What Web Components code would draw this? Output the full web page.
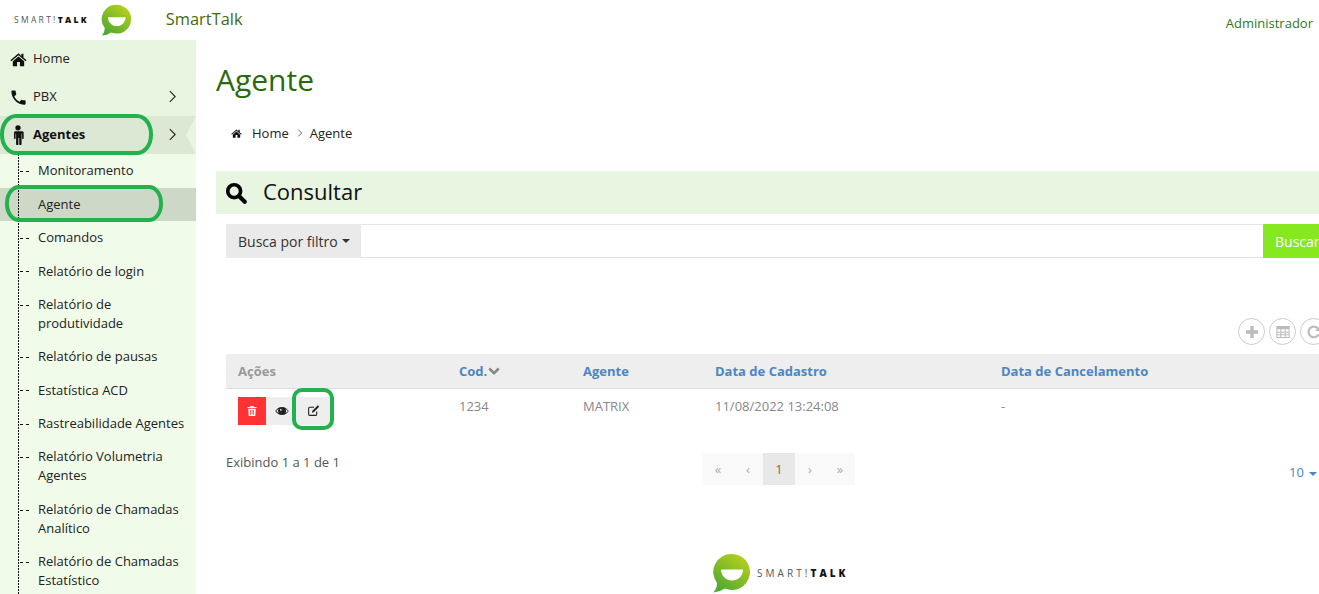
<!DOCTYPE html>
<html lang="pt"><head><meta charset="utf-8"><title>SmartTalk</title>
<style>
html,body{margin:0;padding:0;height:594px;overflow:hidden;background:#fff}
body{font:13px/19px "Open Sans",sans-serif;color:#333}
</style></head><body>
<st-app></st-app>
<script>
const ICONS={
home:'<path fill="currentColor" d="M12 3.200 .6 13l1.300 1.500L12 5.900l10.100 8.600 1.300-1.500-4.400-3.800V4h-3v3.100z"/><path fill="currentColor" d="M12 7.800 4 14.600V21.500h6v-6h4v6h6v-6.900z"/>',
phone:'<path fill="currentColor" d="M6.600 10.800c1.400 2.800 3.800 5.100 6.600 6.600l2.200-2.200c.3-.3.700-.4 1-.2 1.100.4 2.300.6 3.600.6.600 0 1 .4 1 1V20c0 .6-.4 1-1 1C10.600 21 3 13.400 3 4c0-.6.400-1 1-1h3.500c.6 0 1 .4 1 1 0 1.300.2 2.500.6 3.600.1.300 0 .7-.2 1z"/>',
male:'<circle cx="12" cy="3.400" r="3.200" fill="currentColor"/><path fill="currentColor" d="M7 7.500h10c1 0 1.800.8 1.800 1.800v6.700c0 1.300-1.900 1.300-1.900 0v-5.800h-.6V23c0 1.500-2.800 1.500-2.800 0v-7.500h-1V23c0 1.500-2.800 1.500-2.800 0V10.200h-.6v5.800c0 1.300-1.900 1.300-1.900 0V9.300c0-1 .8-1.800 1.800-1.800z"/>',
search:'<circle cx="10" cy="10" r="7" fill="none" stroke="currentColor" stroke-width="4"/><path d="M15.200 15.200 21.500 21.500" stroke="currentColor" stroke-width="4.600" stroke-linecap="round"/>',
trash:'<path fill="currentColor" d="M9 2h6l1 2h5v2.200H3V4h5zM4.500 7.500h15L18.500 22h-13zM8.300 10v9.500h1.500V10zm3 0v9.500h1.500V10zm3 0v9.500h1.500V10z"/>',
eye:'<path fill="currentColor" fill-rule="evenodd" d="M12 5C6.500 5 2.500 8.700.5 12c2 3.300 6 7 11.500 7s9.500-3.700 11.500-7C21.500 8.700 17.500 5 12 5zM5.800 8.500C4.300 9.500 3.100 10.700 2.300 12c1 1.400 2.300 2.700 3.900 3.600A7.500 7.500 0 0 1 5.800 8.500zm12.400 0a7.500 7.500 0 0 1 0 7.100c1.600-.9 2.900-2.200 3.900-3.600-.8-1.300-2-2.500-3.900-3.500z"/><circle cx="10" cy="10" r="1.600" fill="#eee"/>',
edit:'<path fill="none" stroke="currentColor" stroke-width="2" d="M18 14v5a2 2 0 0 1-2 2H5a2 2 0 0 1-2-2V8a2 2 0 0 1 2-2h8"/><path fill="currentColor" d="M20 2.500l2.500 2.500L12.500 15 9 16l1-3.500z"/>',
plus:'<path fill="currentColor" d="M9.500 3h5v6.500H21v5h-6.500V21h-5v-6.500H3v-5h6.500z"/>',
table:'<path fill="currentColor" fill-rule="evenodd" d="M2 3h20v18H2zm1.500 5v3.500h4.500V8zm6 0v3.500h5V8zm6.500 0v3.500h4.500V8zM3.500 13v2.500h4.500V13zm6 0v2.500h5V13zm6.500 0v2.500h4.500V13zM3.500 17v2.500h4.500V17zm6 0v2.500h5V17zm6.500 0v2.500h4.500V17z"/>',
refresh:'<path fill="none" stroke="currentColor" stroke-width="3.200" d="M19 15.500A8 8 0 1 1 18.200 7"/><path fill="currentColor" d="M21.500 2.500v8h-8z"/>',
chev:'<path fill="none" stroke="currentColor" stroke-width="2" d="M7 2 17 12 7 22"/>',
down:'<path fill="none" stroke="currentColor" stroke-width="5" d="M2.500 7 12 16.500 21.500 7"/>'
};
function def(name,css,html){
  customElements.define(name,class extends HTMLElement{
    constructor(){super();const s=this.attachShadow({mode:'open'});
      s.innerHTML='<style>'+css+'</style>'+(typeof html==='function'?html(this):html);}
  });
}
def('st-icon',':host{display:inline-flex;width:var(--s,14px);height:var(--s,14px);flex:none}svg{width:100%;height:100%;display:block}',
  h=>'<svg viewBox="0 0 24 24" aria-hidden="true">'+ICONS[h.getAttribute('name')]+'</svg>');
def('st-logo',`:host{display:inline-flex;align-items:center}
  .t{font:400 var(--fs,8px)/1 "Open Sans",sans-serif;letter-spacing:var(--ls,2px);color:#555;white-space:nowrap}
  b{font-weight:800;color:#111}svg{display:block;flex:none;width:var(--w,32px);height:var(--w,32px)}`,
  h=>{const id='g'+Math.random().toString(36).slice(2);
  const svg='<svg viewBox="0 0 40 40"><defs><linearGradient id="'+id+'" x1=".85" y1="0" x2=".15" y2="1"><stop offset="0" stop-color="#bcd21c"/><stop offset="1" stop-color="#4aa632"/></linearGradient></defs><path fill="url(#'+id+')" d="M21 1a18 18 0 1 1-7 34.600Q9 39 2.500 39.500 6 35.500 6 30A18 18 0 0 1 21 1z"/><path fill="#fff" d="M10 16.500h22c0 6.500-5 11-11 11S10 23 10 16.500z"/></svg>';
  const txt='<span class="t">SMART!<b>TALK</b></span>';
  return h.hasAttribute('icon-first')?svg+'<span style="width:6px"></span>'+txt:txt+'<span style="width:11px"></span>'+svg;});
def('st-header',`:host{display:flex;align-items:center;height:40px;position:relative;padding-left:14px}
  .name{font-size:16.400px;color:#3f6b0f;margin-left:34px;margin-top:-2px;line-height:20px}
  .spacer{flex:1}.admin{font-size:13px;color:#2d7a1f;padding-right:6px;margin-top:7px}`,
  `<st-logo style="--fs:8.500px;--ls:2.300px;--w:32px"></st-logo><span class="name">SmartTalk</span><span class="spacer"></span><span class="admin">Administrador</span>`);
def('st-nav',`:host{display:flex;align-items:center;height:var(--h,38px);padding-left:10px;padding-right:17px;position:relative;color:#222;font-size:13px;box-sizing:border-box}
  :host([active]){background:#dce8d4;font-weight:700;color:#111}
  :host([active])::after{content:"";position:absolute;right:0;top:0;border-style:solid;border-width:19px 10px 19px 0;border-color:transparent #e8f5e0 transparent transparent;display:block;height:0;width:0}
  .ic{width:16px;flex:none;display:flex;justify-content:center;color:#111}
  .l{flex:1;margin-left:7px;position:relative;top:-1px}.c{--s:13px;color:#222;position:relative;top:-1px}`,
  h=>'<span class="ic"><st-icon style="--s:'+(h.getAttribute('size')||16)+'px" name="'+h.getAttribute('icon')+'"></st-icon></span><span class="l"><slot></slot></span>'+(h.hasAttribute('arrow')?'<st-icon class="c" name="chev"></st-icon>':''));
def('st-sub',`:host{display:block;position:relative;padding:7.200px 8px 7.200px 38px;color:#222;font-size:13px;line-height:19px}
  :host([active]){background:#cdd8c7}
  :host::before{content:"";position:absolute;left:20px;top:17px;width:10px;height:1px;background:repeating-linear-gradient(90deg,#111 0 3px,transparent 3px 6px)}
  :host([active])::before{display:none}`,'<slot></slot>');
def('st-sidebar',`:host{display:block;width:196px;flex:none;background:#f1fbea;height:100%;overflow:hidden}
  .top{background:#e8f5e0}.subs{position:relative;margin-top:.200px}
  .subs::before{content:"";position:absolute;left:18px;top:0;bottom:0;width:1px;background:repeating-linear-gradient(180deg,#111 0 2px,transparent 2px 3px);z-index:1}`,
  `<div class="top"><slot name="top"></slot></div><div class="subs"><slot></slot></div>`);
def('st-crumbs',`:host{display:flex;align-items:center;height:20px;padding-left:15px;font-size:13px;color:#222}
  st-icon{--s:11px;color:#111;margin-right:10px}.s{margin:0 6px 0 7px;--s:8px;color:#222}`,
  `<st-icon name="home"></st-icon><span>Home</span><st-icon class="s" name="chev"></st-icon><span>Agente</span>`);
def('st-panel-title',`:host{display:flex;align-items:center;height:43px;background:#e8f5e0;padding-left:9px;font-size:22px;color:#111}
  st-icon{--s:22px;color:#000;margin-right:16px}span{position:relative;top:-1px}`,`<st-icon name="search"></st-icon><span><slot></slot></span>`);
def('st-search',`:host{display:flex;height:34px;margin:10px -10px 0 10px;box-sizing:border-box;font-size:14px}
  .f{background:#eaeaea;width:135px;display:flex;align-items:center;padding-left:12px;box-sizing:border-box;color:#333;flex:none}
  .f i{border:4px solid transparent;border-top-color:#333;border-bottom:0;margin-left:4px}
  .i{flex:1;border:1px solid #e5e5e5;border-left:0;border-right:0}
  .b{background:#86e81f;color:#fff;width:66px;display:flex;align-items:center;padding-left:12px;box-sizing:border-box;flex:none}`,
  `<div class="f">Busca por filtro<i></i></div><div class="i"></div><div class="b">Buscar</div>`);
def('st-round',`:host{display:inline-flex;align-items:center;justify-content:center;width:25px;height:25px;border:1px solid #ccc;border-radius:50%;color:#bbb;flex:none;background:#fff}
  st-icon{--s:var(--is,16px)}`,h=>'<st-icon name="'+h.getAttribute('icon')+'"></st-icon>');
def('st-tools',`:host{display:flex;gap:4px;justify-content:flex-end;margin:60px -8px 0 0;height:27px}`,`<slot></slot>`);
const COLS='grid-template-columns:221px 124px 132px 286px 1fr;';
def('st-thead',`:host{display:grid;${COLS}height:35px;align-items:center;background:#eee;border-bottom:1px solid #ddd;box-sizing:border-box;font-weight:700;font-size:13px;color:#4a86c5;margin-left:10px}
  span{padding-left:12px;display:flex;align-items:center}.a{color:#999}st-icon{--s:12px;color:#888;margin-left:1px}`,
  `<span class="a">Ações</span><span>Cod.<st-icon name="down"></st-icon></span><span>Agente</span><span>Data de Cadastro</span><span>Data de Cancelamento</span>`);
def('st-action',`:host{display:inline-flex;align-items:center;justify-content:center;width:var(--w,28px);height:28px;background:#eee;color:#222;flex:none;box-sizing:border-box}
  :host([danger]){background:#f33;color:#fff}st-icon{--s:var(--is,12px)}`,h=>'<st-icon name="'+h.getAttribute('icon')+'"></st-icon>');
def('st-trow',`:host{display:grid;${COLS}color:#888;font-size:13px;margin-left:10px;height:60px}
  .c{padding:8px 0 0 12px}.a{display:flex;padding:8px 0 0 12px;align-items:flex-start}`,
  `<div class="a"><slot></slot></div><div class="c">1234</div><div class="c">MATRIX</div><div class="c">11/08/2022 13:24:08</div><div class="c">-</div>`);
def('st-pager',`:host{display:flex;height:32px;background:#f9f9f9;width:152px;flex:none;color:#aaa;font-size:13px;margin-top:-1px}
  span{width:30px;display:flex;align-items:center;justify-content:center}span.on{width:32px;background:#e8e8e8;color:#8a6d3b}`,
  `<span>«</span><span>‹</span><span class="on">1</span><span>›</span><span>»</span>`);
def('st-foot',`:host{display:flex;margin:0 0 0 10px;height:60px;position:relative;font-size:13px;color:#555}
  .l{width:477px;flex:none;line-height:19px}.r{position:absolute;left:1063px;top:9px;color:#4a86c5;display:flex;align-items:center}
  .r i{border:4px solid transparent;border-top-color:#4a86c5;border-bottom:0;margin-left:5px;margin-top:2px}`,
  `<div class="l" style="margin-top:-1px">Exibindo 1 a 1 de 1</div><st-pager></st-pager><div class="r">10<i></i></div>`);
def('st-ring',`:host{position:absolute;box-sizing:border-box;border:4px solid #22b14c;pointer-events:none;z-index:5}`,'');
def('st-main',`:host{display:block;flex:1;min-width:0;padding:0 0 0 20px;position:relative}
  h1{font:400 30px/38px "Open Sans",sans-serif;color:#2a6a0a;margin:0;padding-top:21px;height:59px;box-sizing:content-box}
  .crumb{margin-top:-6px;height:38px}`,
  `<h1>Agente</h1><st-crumbs class="crumb"></st-crumbs><slot></slot>`);
def('st-app',`:host{display:flex;flex-direction:column;height:594px;overflow:hidden;position:relative;width:1319px}
  .b{display:flex;flex:1;min-height:0}`,
  `<st-header></st-header>
  <div class="b">
   <st-sidebar>
    <st-nav slot="top" icon="home" size="17">Home</st-nav>
    <st-nav slot="top" icon="phone" size="19" arrow>PBX</st-nav>
    <st-nav slot="top" icon="male" size="20" arrow active>Agentes</st-nav>
    <st-sub>Monitoramento</st-sub>
    <st-sub active>Agente</st-sub>
    <st-sub>Comandos</st-sub>
    <st-sub>Relatório de login</st-sub>
    <st-sub>Relatório de produtividade</st-sub>
    <st-sub>Relatório de pausas</st-sub>
    <st-sub>Estatística ACD</st-sub>
    <st-sub>Rastreabilidade Agentes</st-sub>
    <st-sub>Relatório Volumetria Agentes</st-sub>
    <st-sub>Relatório de Chamadas Analítico</st-sub>
    <st-sub>Relatório de Chamadas Estatístico</st-sub>
   </st-sidebar>
   <st-main>
    <st-panel-title style="margin-top:19px">Consultar</st-panel-title>
    <st-search></st-search>
    <st-tools><st-round icon="plus"></st-round><st-round icon="table"></st-round><st-round icon="refresh"></st-round></st-tools>
    <st-thead style="margin-top:9px"></st-thead>
    <st-trow><st-action danger icon="trash"></st-action><st-action icon="eye" style="--is:14px;--w:32px"></st-action><st-action icon="edit" style="--w:36px;padding-right:6px;--is:13px;padding-bottom:2px"></st-action></st-trow>
    <st-foot style="margin-top:5px"></st-foot>
    <div style="display:flex;margin-top:39px;padding-left:495px"><st-logo icon-first style="--fs:10px;--ls:3.050px;--w:40px"></st-logo></div>
   </st-main>
  </div>
  <st-ring style="left:0;top:114px;width:153px;height:41px;border-radius:16px/20px"></st-ring>
  <st-ring style="left:5px;top:185px;width:158px;height:37px;border-radius:14px/18px"></st-ring>
  <st-ring style="left:292px;top:388px;width:42px;height:42px;border-radius:10px"></st-ring>`);
</script>
</body></html>
